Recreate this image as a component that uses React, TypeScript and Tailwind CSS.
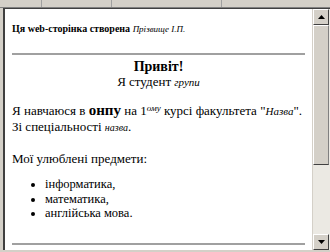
import React from "react";

function Btn({ up }: { up?: boolean }) {
  return (
    <div className="h-[16px] w-[16px] bg-[#d4d0c8] border-t border-l border-t-white border-l-white border-b border-r border-b-[#404040] border-r-[#404040] flex items-center justify-center">
      <svg width="7" height="4" viewBox="0 0 7 4">
        {up ? <polygon points="3.5,0 7,4 0,4" fill="#000" /> : <polygon points="0,0 7,0 3.5,4" fill="#000" />}
      </svg>
    </div>
  );
}

export default function App() {
  return (
    <div className="w-[330px] h-[252px] bg-[#d4d0c8] flex flex-col overflow-hidden font-['Liberation_Serif','Times_New_Roman',serif]">
      <div className="h-[8px] border-b border-b-[#808080] flex">
        <div className="w-[42px] border-r border-r-[#a0a0a0]" />
        <div className="w-[70px] border-r border-r-[#a0a0a0]" />
        <div className="w-[110px] border-r border-r-[#a0a0a0]" />
        <div className="flex-1" />
      </div>
      <div className="flex-1 flex pl-[3px] pb-[2px]">
        <div className="flex-1 flex border-l-2 border-t border-l-[#404040] border-t-[#404040] min-w-0">
          <div className="flex-1 bg-white text-black px-[7px] text-[13px] leading-[15px] min-w-0">
            <div className="mt-[14px] text-[10px] font-bold leading-[12px] whitespace-nowrap">
              Ця web-сторінка створена <i className="font-normal text-[9px]">Прізвище І.П.</i>
            </div>
            <div className="mt-[18px] h-[2px] bg-[#a0a0a0]" />
            <div className="mt-[5px] text-center font-bold text-[14px] leading-[14px]">Привіт!</div>
            <div className="text-center leading-[15px]">
              Я студент <i className="text-[11px]">групи</i>
            </div>
            <div className="mt-[12px] whitespace-nowrap leading-[16px]">
              Я навчаюся в <b className="text-[15px]">онпу</b> на 1<sup className="text-[9px] italic">ому</sup> курсі факультета "<i className="text-[11px]">Назва</i>".
            </div>
            <div className="leading-[16px]">
              Зі спеціальності <i className="text-[10px]">назва</i>.
            </div>
            <div className="mt-[15px] leading-[16px]">Мої улюблені предмети:</div>
            <ul className="mt-[10px] ml-[33px] list-disc text-[12.5px] leading-[14.5px]">
              <li>інформатика,</li>
              <li>математика,</li>
              <li>англійська мова.</li>
            </ul>
            <div className="mt-[22px] h-[2px] bg-[#a0a0a0]" />
          </div>
          <div className="w-[18px] flex flex-col bg-[#ebe9e3] border-l border-l-[#d4d0c8]">
            <Btn up />
            <div className="h-[140px] w-[16px] bg-[#d4d0c8] border-t border-l border-t-white border-l-white border-b border-r border-b-[#404040] border-r-[#808080]" />
            <div className="flex-1" />
            <Btn />
          </div>
        </div>
      </div>
    </div>
  );
}
